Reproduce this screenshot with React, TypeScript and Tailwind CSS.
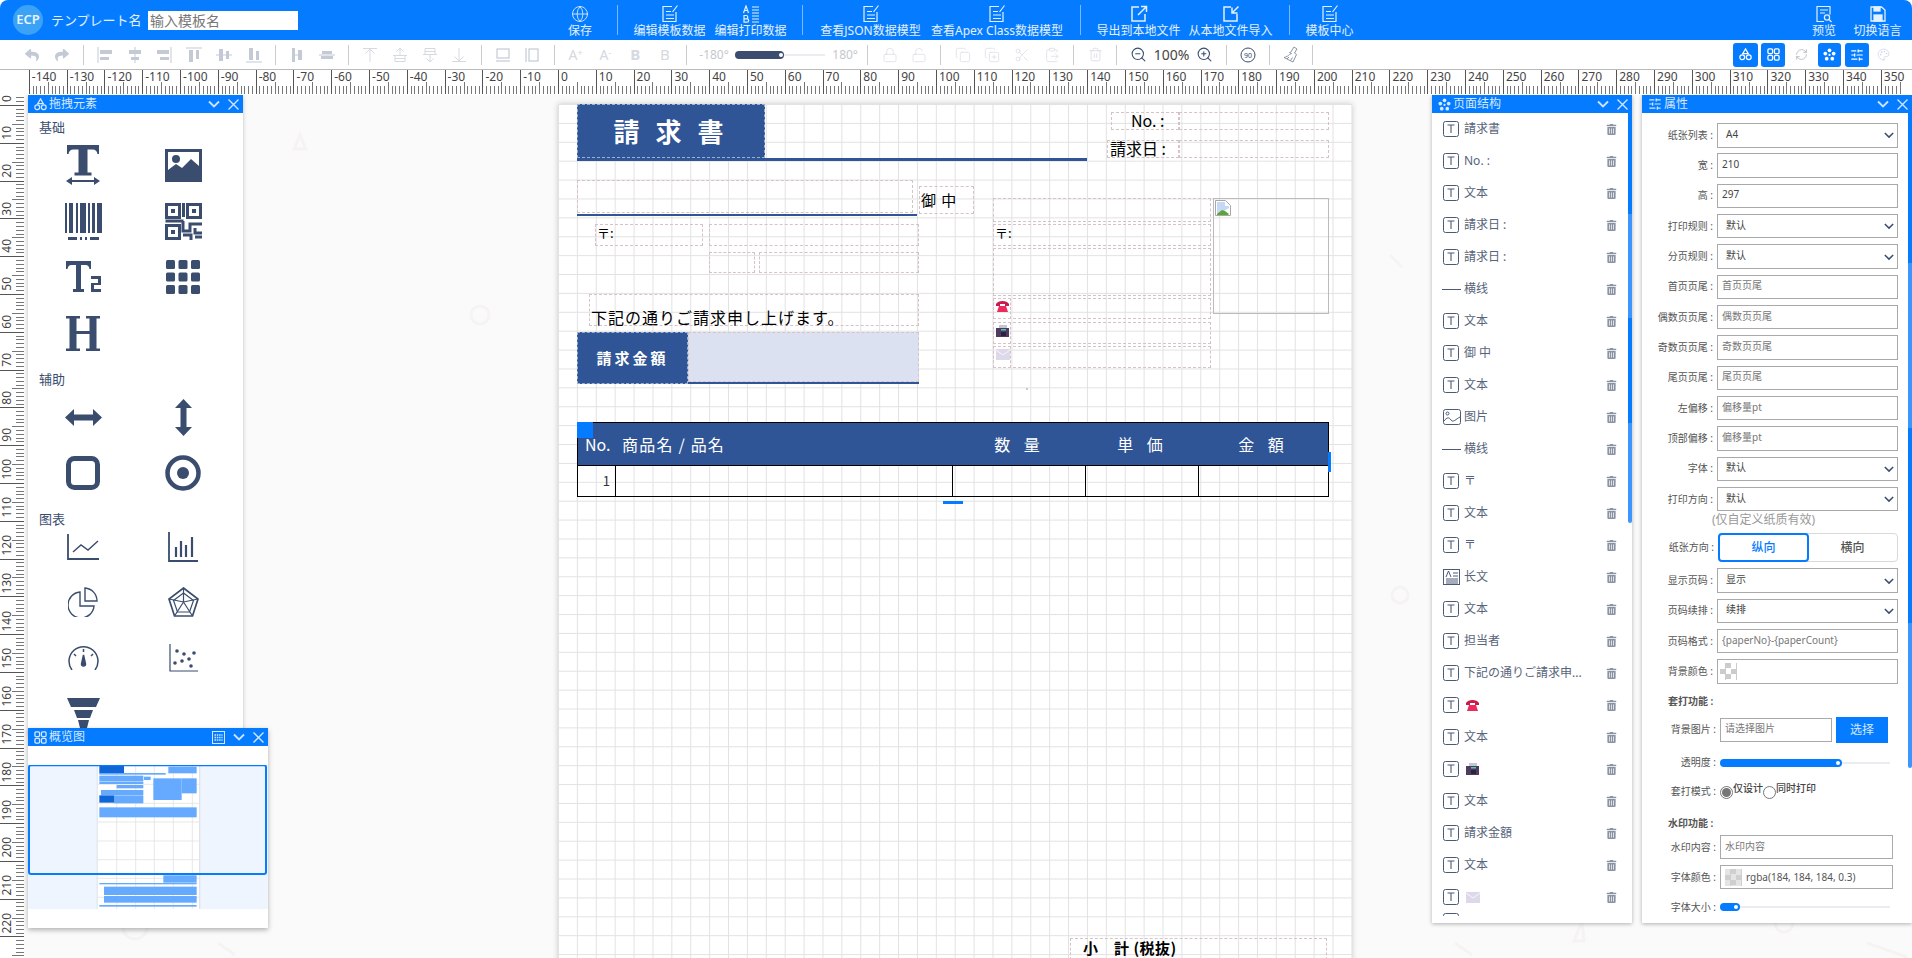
import React from 'react';
import {
  Copy, CopyPlus, ClipboardPaste, Globe, Lock, LockOpen,
  Palette, RefreshCw, Scissors, SlidersHorizontal, Trash2, ZoomIn, ZoomOut,
} from 'lucide-react';
import { FaReply, FaShare, FaTrashAlt } from 'react-icons/fa';

const ORIGIN_X = 558;
const ORIGIN_Y = 105;
const MM = 3.7795;

function Chevron({ className = 'text-[#cfe5ff]' }: { className?: string }) {
  return (
    <svg width="12" height="8" viewBox="0 0 12 8" className={className} fill="none" stroke="currentColor" strokeWidth="1.8">
      <path d="M1 1.5l5 5 5-5" />
    </svg>
  );
}

function CloseMark() {
  return (
    <svg width="11" height="11" viewBox="0 0 11 11" className="text-[#d5e8ff]" fill="none" stroke="currentColor" strokeWidth="1.3">
      <path d="M.5.5l10 10M10.5.5l-10 10" />
    </svg>
  );
}

function ShapesIcon({ size = 13 }: { size?: number }) {
  return (
    <svg width={size} height={size} viewBox="0 0 14 14" fill="none" stroke="currentColor" strokeWidth="1.3">
      <path d="M7 1l3 5H4z" />
      <circle cx="3.5" cy="10" r="2.6" />
      <circle cx="10.5" cy="10" r="2.6" />
    </svg>
  );
}

function ClusterIcon({ size = 13 }: { size?: number }) {
  return (
    <svg width={size} height={size} viewBox="0 0 14 14" fill="currentColor">
      <circle cx="7" cy="2.5" r="2" />
      <circle cx="2.5" cy="6" r="2" />
      <circle cx="11.5" cy="6" r="2" />
      <circle cx="4" cy="11.5" r="2" />
      <circle cx="10" cy="11.5" r="2" />
      <circle cx="7" cy="7.5" r="1.2" />
    </svg>
  );
}

function TilesIcon({ size = 13 }: { size?: number }) {
  return (
    <svg width={size} height={size} viewBox="0 0 14 14" fill="none" stroke="currentColor" strokeWidth="1.4">
      <rect x="1" y="1" width="5" height="5" rx="1.2" />
      <rect x="8" y="1" width="5" height="5" rx="1.2" />
      <rect x="1" y="8" width="5" height="5" rx="1.2" />
      <rect x="8" y="8" width="5" height="5" rx="1.2" />
    </svg>
  );
}

function PanelHeader({ icon, title, extra }: { icon: React.ReactNode; title: string; extra?: React.ReactNode }) {
  return (
    <div className="h-[18px] bg-[#057cff] flex items-center pl-[6px] pr-[4px] text-[#d5e8ff] shrink-0">
      {icon}
      <span className="ml-[2px] text-[12px] leading-[18px]">{title}</span>
      <div className="ml-auto flex items-center gap-[8px]">
        {extra}
        <Chevron />
        <CloseMark />
      </div>
    </div>
  );
}

function DocEdit() {
  return (
    <svg width="18" height="18" viewBox="0 0 18 18" fill="none" stroke="currentColor" strokeWidth="1.2">
      <path d="M11 1.5H2v15h13V7" />
      <path d="M16.5 .5l-5 6.5" />
      <path d="M5 6.5h5M5 10h8M5 13.5h8" />
    </svg>
  );
}

function AbList() {
  return (
    <svg width="18" height="18" viewBox="0 0 18 18" fill="none" stroke="currentColor" strokeWidth="1.2">
      <path d="M1.5 8l2.5-7 2.5 7M2.5 5.5h3" />
      <path d="M2 10.5h2.5a1.7 1.7 0 010 3.3H2zM2 13.8h3a1.7 1.7 0 010 3.4H2z" />
      <path d="M10 2h7M10 5h7M10 8h7M10 11h7M10 14h7M10 17h7" />
    </svg>
  );
}

function ExportIcon() {
  return (
    <svg width="18" height="18" viewBox="0 0 18 18" fill="none" stroke="currentColor" strokeWidth="1.5">
      <path d="M9 2H2v14h13V9" />
      <path d="M8 10l8-8M11 1.5h5.5V7" />
    </svg>
  );
}

function ImportIcon() {
  return (
    <svg width="18" height="18" viewBox="0 0 18 18" fill="none" stroke="currentColor" strokeWidth="1.5">
      <path d="M9 2H2v14h13V9" />
      <path d="M16.5 1.5l-6 6M10 2.5v5.5h5.5" />
    </svg>
  );
}

function PreviewIcon() {
  return (
    <svg width="18" height="18" viewBox="0 0 18 18" fill="none" stroke="currentColor" strokeWidth="1.2">
      <path d="M9 16.5H2v-15h13v8" />
      <path d="M5 5h8M5 8h5" />
      <circle cx="12" cy="12.5" r="2.6" />
      <path d="M14 14.5l2.5 2.5" />
    </svg>
  );
}

function FloppyIcon() {
  return (
    <svg width="18" height="18" viewBox="0 0 18 18" fill="none" stroke="currentColor" strokeWidth="1.3">
      <path d="M2 2h10.5l3.5 3v11H2z" />
      <rect x="5" y="2" width="6" height="4" fill="currentColor" />
      <rect x="5" y="10" width="8" height="6" fill="currentColor" />
    </svg>
  );
}

function HeaderBtn({ label, className, children }: { label: string; className: string; children: React.ReactNode }) {
  return (
    <div className={`flex flex-col items-center pt-[5px] shrink-0 text-[#e3f0ff] ${className}`}>
      <div className="h-[18px] flex items-center">{children}</div>
      <span className="mt-[1px] text-[12px] leading-[14px] whitespace-nowrap">{label}</span>
    </div>
  );
}

function HeaderSep({ className }: { className: string }) {
  return <div className={`w-px h-[30px] bg-[#7ab8ff] shrink-0 ${className}`} />;
}

function Header() {
  return (
    <div className="h-[40px] bg-[#057cff] rounded-t-[8px] flex items-start shrink-0">
      <div className="mt-[5px] ml-[13px] w-[30px] h-[30px] rounded-full bg-[#3ba2f5] text-[#e8f5ff] text-[13px] font-semibold flex items-center justify-center shrink-0">ECP</div>
      <span className="mt-[12px] ml-[8px] w-[97px] text-[13px] leading-[16px] text-[#e3f0ff] whitespace-nowrap">テンプレート名</span>
      <div className="mt-[11px] w-[150px] h-[19px] bg-white text-[14px] leading-[19px] pl-[2px] text-[#777] shrink-0">输入模板名</div>
      <HeaderBtn label="保存" className="ml-[262px] w-[40px]"><Globe size={18} strokeWidth={1.1} /></HeaderBtn>
      <HeaderSep className="mt-[5px] ml-[17px]" />
      <HeaderBtn label="编辑模板数据" className="ml-[15px] w-[73px]"><DocEdit /></HeaderBtn>
      <HeaderBtn label="编辑打印数据" className="ml-[8px] w-[73px]"><AbList /></HeaderBtn>
      <HeaderSep className="mt-[5px] ml-[15px]" />
      <HeaderBtn label="查看JSON数据模型" className="ml-[16px] w-[103px]"><DocEdit /></HeaderBtn>
      <HeaderBtn label="查看Apex Class数据模型" className="ml-[8px] w-[134px]"><DocEdit /></HeaderBtn>
      <HeaderSep className="mt-[5px] ml-[16px]" />
      <HeaderBtn label="导出到本地文件" className="ml-[15px] w-[85px]"><ExportIcon /></HeaderBtn>
      <HeaderBtn label="从本地文件导入" className="ml-[8px] w-[83px]"><ImportIcon /></HeaderBtn>
      <HeaderSep className="mt-[5px] ml-[17px]" />
      <HeaderBtn label="模板中心" className="ml-[15px] w-[49px]"><DocEdit /></HeaderBtn>
      <HeaderBtn label="预览" className="ml-auto w-[24px]"><PreviewIcon /></HeaderBtn>
      <HeaderBtn label="切换语言" className="ml-[18px] mr-[11px] w-[47px]"><FloppyIcon /></HeaderBtn>
    </div>
  );
}

function Tool({ children, wide }: { children: React.ReactNode; wide?: boolean }) {
  return <div className={`h-[24px] flex items-center justify-center shrink-0 ${wide ? 'w-[36.8px]' : 'w-[29.8px]'}`}>{children}</div>;
}

function ToolSep() {
  return (
    <div className="w-[13.4px] flex justify-center shrink-0">
      <div className="w-px h-[20px] bg-[#cccccc]" />
    </div>
  );
}

// filled bars with a guide line, used by all the align buttons
function Bars({ rects, line }: { rects: number[][]; line: number[] }) {
  return (
    <svg width="16" height="16" viewBox="0 0 16 16" className="text-[#c3cad6]">
      <path d={`M${line[0]} ${line[1]}L${line[2]} ${line[3]}`} stroke="currentColor" strokeWidth="1" />
      {rects.map((r, i) => <rect key={i} x={r[0]} y={r[1]} width={r[2]} height={r[3]} fill="currentColor" />)}
    </svg>
  );
}

function LayerIcon({ d }: { d: string }) {
  return (
    <svg width="16" height="16" viewBox="0 0 16 16" fill="none" stroke="#d5d9e0" strokeWidth="1">
      <path d={d} />
    </svg>
  );
}

function BroomIcon() {
  return (
    <svg width="16" height="17" viewBox="0 0 16 17" fill="none" stroke="#8a94a6" strokeWidth="1">
      <path d="M11 1l3 2-2.500 4 2 1.500-3.500 7.500-9-4.500c2.500-.5 4-1.500 5.500-3L8.500 7.500 6.500 6.500l1 0z" />
      <path d="M4 13l2-2M7.500 14.500l2-3" />
    </svg>
  );
}

function Toolbar() {
  const off = 'text-[#d5d9e0]';
  return (
    <div className="h-[30px] bg-white border-b border-[#bbbbbb] flex items-center pl-[17px] pr-[22px] shrink-0">
      <Tool><FaReply size={14} className="text-[#c3cad6]" /></Tool>
      <Tool><FaShare size={14} className="text-[#c3cad6]" /></Tool>
      <ToolSep />
      <Tool><Bars line={[1, 0, 1, 16]} rects={[[3, 3, 12, 4], [3, 10, 9, 3]]} /></Tool>
      <Tool><Bars line={[8, 0, 8, 16]} rects={[[2, 3, 12, 4], [4, 10, 8, 3]]} /></Tool>
      <Tool><Bars line={[15, 0, 15, 16]} rects={[[1, 3, 12, 4], [4, 10, 9, 3]]} /></Tool>
      <Tool><Bars line={[0, 1, 16, 1]} rects={[[3, 3, 4, 12], [10, 3, 3, 9]]} /></Tool>
      <Tool><Bars line={[0, 8, 16, 8]} rects={[[3, 2, 4, 12], [10, 4, 3, 8]]} /></Tool>
      <Tool><Bars line={[0, 15, 16, 15]} rects={[[3, 1, 4, 12], [10, 4, 3, 9]]} /></Tool>
      <ToolSep />
      <Tool><Bars line={[8, 0, 8, 0]} rects={[[3, 1, 3, 14], [9, 3, 4, 10], [6, 7.5, 3, 1]]} /></Tool>
      <Tool><Bars line={[0, 8, 16, 8]} rects={[[3, 4, 10, 3], [2, 9, 12, 3]]} /></Tool>
      <ToolSep />
      <Tool><LayerIcon d="M1 1.500h14M8 15V2M3.500 6.500L8 2l4.500 4.500" /></Tool>
      <Tool><LayerIcon d="M8 8V1M4.500 4.500L8 1l3.500 3.500M1 8.500h14M3 8.500v6h10v-6M3 11.500h10" /></Tool>
      <Tool><LayerIcon d="M1 7.500h14M3 7.500v-6h10v6M3 4.500h10M8 8v7M4.500 11.500L8 15l3.500-3.500" /></Tool>
      <Tool><LayerIcon d="M1 14.500h14M8 1v13M3.500 9.500L8 14l4.500-4.500" /></Tool>
      <ToolSep />
      <Tool>
        <svg width="16" height="16" viewBox="0 0 16 16" fill="none" stroke="#c3cad6" strokeWidth="1.2"><rect x="2" y="2" width="12" height="9" /><path d="M1 14h14" /></svg>
      </Tool>
      <Tool>
        <svg width="16" height="16" viewBox="0 0 16 16" fill="none" stroke="#c3cad6" strokeWidth="1.2"><rect x="5" y="2" width="9" height="12" /><path d="M2 1v14" /></svg>
      </Tool>
      <ToolSep />
      <Tool><span className="text-[14px] text-[#d5d9e0]">A<sup className="text-[9px]">+</sup></span></Tool>
      <Tool><span className="text-[14px] text-[#d5d9e0]">A<sup className="text-[9px]">-</sup></span></Tool>
      <Tool><span className="text-[15px] font-bold text-[#d5d9e0]">B</span></Tool>
      <Tool><span className="text-[15px] text-[#d5d9e0]">B</span></Tool>
      <ToolSep />
      <div className="w-[168px] flex items-center shrink-0 pl-[6px] text-[12px] text-[#c4c8ce]">
        <span className="w-[36px]">-180°</span>
        <div className="w-[90px] h-[2px] bg-[#ececf0] relative">
          <div className="absolute left-0 top-[-3px] w-[49px] h-[8px] rounded-full bg-[#3a4d6e]" />
          <div className="absolute left-[44px] top-[-1px] w-[4px] h-[4px] rounded-full bg-white" />
        </div>
        <span className="ml-[7px]">180°</span>
      </div>
      <ToolSep />
      <Tool><Lock size={16} strokeWidth={1} className={off} /></Tool>
      <Tool><LockOpen size={16} strokeWidth={1} className={off} /></Tool>
      <ToolSep />
      <Tool><Copy size={16} strokeWidth={1} className={off} /></Tool>
      <Tool><CopyPlus size={16} strokeWidth={1} className={off} /></Tool>
      <Tool><Scissors size={16} strokeWidth={1} className={off} /></Tool>
      <Tool><ClipboardPaste size={16} strokeWidth={1} className={off} /></Tool>
      <ToolSep />
      <Tool><Trash2 size={15} strokeWidth={1.3} className={off} /></Tool>
      <ToolSep />
      <Tool><ZoomOut size={17} strokeWidth={1.5} className="text-[#3a4d6e]" /></Tool>
      <Tool wide><span className="text-[14px] text-[#444]">100%</span></Tool>
      <Tool><ZoomIn size={17} strokeWidth={1.5} className="text-[#3a4d6e]" /></Tool>
      <ToolSep />
      <Tool>
        <svg width="16" height="16" viewBox="0 0 16 16" fill="none" stroke="#3a4d6e" strokeWidth="1"><circle cx="8" cy="8" r="7" /><text x="8" y="10.5" textAnchor="middle" fontSize="7" fill="#3a4d6e" stroke="none">90</text></svg>
      </Tool>
      <ToolSep />
      <Tool><BroomIcon /></Tool>
      <ToolSep />
      <div className="ml-auto flex items-center shrink-0">
        <div className="w-[25px] h-[24px] rounded-[3px] bg-[#057cff] flex items-center justify-center text-white"><ShapesIcon /></div>
        <div className="ml-[3px] w-[24px] h-[24px] rounded-[3px] bg-[#057cff] flex items-center justify-center text-white"><TilesIcon /></div>
        <div className="w-[33px] flex justify-center"><RefreshCw size={13} strokeWidth={1} className="text-[#8a94a6]" /></div>
        <div className="w-[23px] h-[24px] rounded-[3px] bg-[#057cff] flex items-center justify-center text-white"><ClusterIcon /></div>
        <div className="ml-[4px] w-[24px] h-[24px] rounded-[3px] bg-[#057cff] flex items-center justify-center text-white"><SlidersHorizontal size={14} /></div>
        <div className="ml-[7px] w-[14px] flex justify-center"><Palette size={13} strokeWidth={1} className="text-[#b9c4e6]" /></div>
      </div>
    </div>
  );
}

const range = (a: number, b: number) => Array.from({ length: b - a + 1 }, (_, i) => a + i);

function TopRuler() {
  const base = ORIGIN_X - 24;
  return (
    <div className="h-[25px] bg-white flex shrink-0">
      <div className="w-[24px] shrink-0" />
      <div className="relative w-[1888px] h-[25px] overflow-hidden">
        <svg width="1888" height="25" className="block">
          {range(-140, 355).map((mm) => {
            const x = Math.round(base + mm * MM) + 0.5;
            const major = mm % 10 === 0;
            const mid = mm % 5 === 0;
            return <path key={mm} d={`M${x} ${major ? 0 : mid ? 12 : 16}V24`} stroke={major ? '#555' : '#777'} strokeWidth="1" />;
          })}
        </svg>
        {range(-14, 35).map((t) => (
          <span
            key={t}
            className="absolute top-[1px] text-[12px] leading-[12px] text-[#444] whitespace-nowrap"
            style={{ left: base + t * 10 * MM + 3 }}
          >
            {t * 10}
          </span>
        ))}
      </div>
    </div>
  );
}

function LeftRuler() {
  const base = ORIGIN_Y - 95;
  return (
    <div className="relative w-[24px] h-[863px] overflow-hidden">
      <svg width="24" height="863" className="block bg-white">
        {range(-2, 230).map((mm) => {
          const y = Math.round(base + mm * MM) + 0.5;
          const major = mm % 10 === 0;
          const mid = mm % 5 === 0;
          return <path key={mm} d={`M${major ? 0 : mid ? 12 : 16} ${y}H24`} stroke={major ? '#555' : '#777'} strokeWidth="1" />;
        })}
      </svg>
      {range(0, 22).map((t) => (
        <span
          key={t}
          className="absolute left-[1px] text-[12px] leading-[12px] text-[#444] whitespace-nowrap [writing-mode:vertical-rl] rotate-180"
          style={{ bottom: 863 - (base + t * 10 * MM) + 3 }}
        >
          {t * 10}
        </span>
      ))}
    </div>
  );
}

const INK = '#3a4d6e';

const elementIcons = {
  text: (
    <svg width="36" height="40" viewBox="0 0 36 40" fill={INK}>
      <path d="M2 0h32v9h-1.500c-.5-3-2-4.500-5-4.500h-5v23h4v3h-17v-3h4v-23h-5c-3 0-4.500 1.500-5 4.500H2z" />
      <path d="M1 36l6-4v3h22v-3l6 4-6 4v-3H7v3z" />
    </svg>
  ),
  image: (
    <svg width="37" height="33" viewBox="0 0 37 33" fill={INK}>
      <path fillRule="evenodd" d="M0 0h37v33H0zM3 3v18l8-6 6 4 9-9 8 7V3z" />
      <circle cx="11" cy="10" r="4" />
    </svg>
  ),
  barcode: (
    <svg width="37" height="37" viewBox="0 0 37 37" fill={INK}>
      <rect x="0" y="0" width="2" height="30" /><rect x="4" y="0" width="4" height="30" /><rect x="11" y="0" width="2" height="30" />
      <rect x="15" y="0" width="6" height="30" /><rect x="23" y="0" width="2" height="30" /><rect x="27" y="0" width="3" height="30" /><rect x="32" y="0" width="5" height="30" />
      <rect x="3" y="34" width="9" height="3" /><rect x="15" y="34" width="2" height="3" /><rect x="20" y="34" width="2" height="3" /><rect x="25" y="34" width="9" height="3" />
    </svg>
  ),
  qr: (
    <svg width="37" height="37" viewBox="0 0 37 37" fill="none" stroke={INK} strokeWidth="3">
      <rect x="1.500" y="1.500" width="13" height="13" /><rect x="22.500" y="1.500" width="13" height="13" /><rect x="1.500" y="22.500" width="13" height="13" />
      <rect x="6" y="6" width="4" height="4" fill={INK} stroke="none" /><rect x="27" y="6" width="4" height="4" fill={INK} stroke="none" /><rect x="6" y="27" width="4" height="4" fill={INK} stroke="none" />
      <path d="M18.500 0v14M18.500 18h-18M18 18v10h7v-7h12M18 32h8v5M30 25v5h7M30 34h7" />
    </svg>
  ),
  text2: (
    <svg width="35" height="32" viewBox="0 0 35 32" fill={INK}>
      <path d="M0 0h25v8h-1.500c-.5-2.500-1.500-4-4-4H15v24h3v3H7v-3h3V4H5.500c-2.500 0-3.500 1.500-4 4H0z" />
      <path d="M25 15h10v9h-7v4h7v3H25v-9h7v-4h-7z" />
    </svg>
  ),
  grid: (
    <svg width="34" height="34" viewBox="0 0 34 34" fill={INK}>
      {[0, 12.5, 25].flatMap((y) => [0, 12.5, 25].map((x) => <rect key={`${x}-${y}`} x={x} y={y} width="9" height="9" rx="1.5" />))}
    </svg>
  ),
  heading: (
    <svg width="34" height="35" viewBox="0 0 34 35" fill={INK}>
      <path d="M0 0h14v2.500h-3.500v12.500h13V2.500H20V0h14v2.500h-3.500v30H34V35H20v-2.500h3.500V18h-13v14.500H14V35H0v-2.500h3.500v-30H0z" />
    </svg>
  ),
  hline: (
    <svg width="37" height="17" viewBox="0 0 37 17" fill={INK}>
      <path d="M0 8.500L9 0v5.500h19V0l9 8.500-9 8.500v-5.500H9V17z" />
    </svg>
  ),
  vline: (
    <svg width="17" height="37" viewBox="0 0 17 37" fill={INK}>
      <path d="M8.500 0L17 9h-5.500v19H17l-8.500 9L0 28h5.500V9H0z" />
    </svg>
  ),
  rect: (
    <svg width="34" height="34" viewBox="0 0 34 34" fill="none" stroke={INK} strokeWidth="5">
      <rect x="2.5" y="2.5" width="29" height="29" rx="6" />
    </svg>
  ),
  circle: (
    <svg width="36" height="36" viewBox="0 0 36 36" fill="none" stroke={INK} strokeWidth="4.5">
      <circle cx="18" cy="18" r="15.5" />
      <circle cx="18" cy="18" r="6" fill={INK} stroke="none" />
    </svg>
  ),
  line: (
    <svg width="32" height="26" viewBox="0 0 32 26" fill="none" stroke={INK} strokeWidth="1.4">
      <path d="M1 0v25h31" strokeWidth="1.8" />
      <path d="M6 18l8-7 7 5 10-9" />
    </svg>
  ),
  bar: (
    <svg width="30" height="30" viewBox="0 0 30 30" fill="none" stroke={INK} strokeWidth="1.8">
      <path d="M1 0v29h29" />
      <path d="M8 25V15M13 25V9M18 25V13M24 25V5" strokeWidth="2.2" />
    </svg>
  ),
  pie: (
    <svg width="30" height="30" viewBox="0 0 30 30" fill="none" stroke={INK} strokeWidth="1.4">
      <path d="M12 5a13 13 0 1014 14H12z" />
      <path d="M17 1a13 13 0 0112 13H17z" />
    </svg>
  ),
  radar: (
    <svg width="31" height="30" viewBox="0 0 31 30" fill="none" stroke={INK} strokeWidth="1.2">
      <path d="M15.500 1L30 12l-5.500 17h-18L1 12z" strokeWidth="1.7" />
      <path d="M15.500 6l10 7.500-4 11.500H9.500l-4-11.500z" />
      <path d="M15.500 1v14M1 12l14.500 3L30 12M6.500 29l9-14 9 14" />
    </svg>
  ),
  gauge: (
    <svg width="31" height="25" viewBox="0 0 31 25" fill="none" stroke={INK} strokeWidth="1.5">
      <path d="M4 25A14.500 14.500 0 1127 25" />
      <path d="M15.500 4v3M6 9l2 2M25 9l-2 2" />
      <path d="M15.500 10l-2 9a2 2 0 004 0z" fill={INK} />
    </svg>
  ),
  scatter: (
    <svg width="29" height="28" viewBox="0 0 29 28" fill={INK}>
      <path d="M1 0v27h28" fill="none" stroke={INK} strokeWidth="1.2" />
      <circle cx="8" cy="7" r="1.8" /><circle cx="15" cy="10" r="1.8" /><circle cx="25" cy="9" r="1.8" />
      <circle cx="13" cy="17" r="1.8" /><circle cx="20" cy="15" r="1.8" /><circle cx="6" cy="19" r="1.8" /><circle cx="22" cy="22" r="1.8" />
    </svg>
  ),
  funnel: (
    <svg width="33" height="30" viewBox="0 0 33 30" fill={INK}>
      <path d="M0 0h33l-4 9H4zM7 12h19l-3 8H10zM11 22h11l-2 8h-7z" />
    </svg>
  ),
};

function IconGrid({ icons, className }: { icons: React.ReactNode[]; className: string }) {
  return (
    <div className={`grid grid-cols-[100px_100px] pl-[5px] ${className}`}>
      {icons.map((icon, i) => (
        <div key={i} className="h-full flex items-center justify-center">{icon}</div>
      ))}
    </div>
  );
}

function SectionTitle({ label, className }: { label: string; className: string }) {
  return <div className={`h-[16px] pl-[11px] text-[13px] leading-[16px] text-[#3a4d6e] ${className}`}>{label}</div>;
}

function ElementPanel() {
  const e = elementIcons;
  return (
    <div className="w-[215px] h-[640px] bg-white shadow-[0_1px_4px_rgba(0,0,0,0.25)] overflow-hidden flex flex-col">
      <PanelHeader icon={<ShapesIcon />} title="拖拽元素" />
      <SectionTitle label="基础" className="mt-[6px]" />
      <IconGrid className="mt-[2px] auto-rows-[56px]" icons={[e.text, e.image, e.barcode, e.qr, e.text2, e.grid, e.heading]} />
      <SectionTitle label="辅助" className="mt-[10px]" />
      <IconGrid className="mt-[2px] auto-rows-[56px]" icons={[e.hline, e.vline, e.rect, e.circle]} />
      <SectionTitle label="图表" className="mt-[10px]" />
      <IconGrid className="mt-[-8px] auto-rows-[55.5px]" icons={[e.line, e.bar, e.pie, e.radar, e.gauge, e.scatter, e.funnel]} />
    </div>
  );
}

function OverviewMap() {
  const lite = '#66aaff';
  const dark = '#0f66d6';
  return (
    <svg width="240" height="144.33" viewBox="84 735 720 433" className="block">
      <rect x="84" y="735" width="720" height="433" fill="#eff5fe" />
      <rect x="293" y="738" width="304" height="430" fill="#fff" />
      <rect x="290" y="738" width="3" height="430" fill="#dfe3ea" />
      <rect x="597" y="738" width="4" height="430" fill="#dfe3ea" />
      {[350, 407, 463, 520, 577].map((x) => <path key={x} d={`M${x} 738V1168`} stroke="#dcdcdc" strokeWidth="2" />)}
      {[793, 850, 906, 963, 1019, 1075, 1132].map((y) => <path key={y} d={`M293 ${y}H597`} stroke="#dcdcdc" strokeWidth="2" />)}
      <rect x="298" y="738" width="74" height="22" fill={dark} />
      <rect x="505" y="740" width="85" height="20" fill={lite} />
      <rect x="298" y="759" width="199" height="5" fill={lite} />
      <rect x="298" y="767" width="132" height="17" fill={lite} />
      <rect x="432" y="770" width="20" height="10" fill={lite} />
      <rect x="298" y="785" width="132" height="7" fill={lite} />
      <rect x="350" y="795" width="80" height="10" fill={lite} />
      <rect x="460" y="775" width="85" height="65" fill={lite} />
      <rect x="545" y="775" width="45" height="45" fill={lite} />
      <rect x="303" y="810" width="127" height="15" fill={lite} />
      <rect x="342" y="826" width="88" height="24" fill={lite} />
      <rect x="298" y="826" width="44" height="22" fill={dark} />
      <rect x="298" y="862" width="292" height="30" fill={lite} />
      <rect x="490" y="1066" width="100" height="22" fill={lite} />
      <rect x="298" y="1089" width="292" height="4" fill={lite} />
      <rect x="312" y="1100" width="278" height="25" fill={lite} />
      <rect x="312" y="1128" width="278" height="20" fill={lite} />
      <rect x="298" y="1155" width="292" height="5" fill={lite} />
      <rect x="87" y="736" width="711" height="326" rx="6" fill="none" stroke="#057cff" strokeWidth="6" />
    </svg>
  );
}

function OverviewPanel() {
  return (
    <div className="absolute left-0 top-[633px] w-[240px] h-[200px] bg-white shadow-[0_2px_5px_rgba(0,0,0,0.3)]">
      <PanelHeader
        icon={<TilesIcon />}
        title="概览图"
        extra={
          <svg width="13" height="13" viewBox="0 0 13 13" fill="none" stroke="#d5e8ff" strokeWidth="1">
            <rect x=".5" y=".5" width="12" height="12" />
            <path d="M2.500 4h8M2.500 6.500h8M2.500 9h8" strokeWidth="1.5" strokeDasharray="1.5 .8" />
          </svg>
        }
      />
      <div className="mt-[19px]"><OverviewMap /></div>
    </div>
  );
}

function PhoneIcon() {
  return (
    <svg width="13" height="11" viewBox="0 0 13 11">
      <path d="M0 3c2-4 11-4 13 0v2H9V3H4v2H0z" fill="#c81b4b" />
      <path d="M3 5h7l2 6H1z" fill="#ec2a5c" />
    </svg>
  );
}

function FaxIcon() {
  return (
    <svg width="13" height="12" viewBox="0 0 13 12">
      <rect x="3" y="0" width="8" height="4" fill="#c9c4cf" />
      <rect x="0" y="3" width="13" height="9" fill="#4f3a60" />
      <rect x="5" y="4" width="5" height="1.5" fill="#3fd0b0" />
      <rect x="5" y="7" width="5" height="4" fill="#2e2040" />
    </svg>
  );
}

function MailIcon() {
  return (
    <svg width="14" height="11" viewBox="0 0 14 11">
      <rect width="14" height="11" fill="#ded9ea" />
      <path d="M0 1l7 5 7-5" fill="none" stroke="#f6f4fa" strokeWidth="1" />
    </svg>
  );
}

function TextItemIcon() {
  return (
    <svg width="16" height="16" viewBox="0 0 16 16" fill="none" stroke="#4a5a78" strokeWidth="1">
      <rect x=".5" y=".5" width="15" height="15" rx="2" />
      <path d="M4.500 4h7M8 4v8" strokeWidth="1.1" />
    </svg>
  );
}

function LineItemIcon() {
  return <div className="w-[19px] h-px bg-[#4a5a78] -ml-[1px]" />;
}

function PicItemIcon() {
  return (
    <svg width="18" height="16" viewBox="0 0 18 16" fill="none" stroke="#4a5a78" strokeWidth="1">
      <rect x=".5" y=".5" width="17" height="15" rx="2" />
      <circle cx="4.5" cy="4.5" r="1.5" />
      <path d="M1 12c3-4 5-4 7-1s5-1 9-3" />
    </svg>
  );
}

function LongItemIcon() {
  return (
    <svg width="17" height="16" viewBox="0 0 17 16" fill="none" stroke="#4a5a78" strokeWidth="1">
      <rect x=".5" y=".5" width="16" height="15" />
      <path d="M3 8l2.500-6L8 8M10 4h5M10 7h5M3 10h12M3 12h12M3 14h12" />
    </svg>
  );
}

type TreeItem = { kind: 'text' | 'line' | 'pic' | 'long'; label?: string; mark?: React.ReactNode };

const treeItems: TreeItem[] = [
  { kind: 'text', label: '請求書' },
  { kind: 'text', label: 'No. :' },
  { kind: 'text', label: '文本' },
  { kind: 'text', label: '請求日 :' },
  { kind: 'text', label: '請求日 :' },
  { kind: 'line', label: '横线' },
  { kind: 'text', label: '文本' },
  { kind: 'text', label: '御 中' },
  { kind: 'text', label: '文本' },
  { kind: 'pic', label: '图片' },
  { kind: 'line', label: '横线' },
  { kind: 'text', label: '〒' },
  { kind: 'text', label: '文本' },
  { kind: 'text', label: '〒' },
  { kind: 'long', label: '长文' },
  { kind: 'text', label: '文本' },
  { kind: 'text', label: '担当者' },
  { kind: 'text', label: '下記の通りご請求申...' },
  { kind: 'text', mark: <PhoneIcon /> },
  { kind: 'text', label: '文本' },
  { kind: 'text', mark: <FaxIcon /> },
  { kind: 'text', label: '文本' },
  { kind: 'text', label: '請求金額' },
  { kind: 'text', label: '文本' },
  { kind: 'text', mark: <MailIcon /> },
];

function StructurePanel() {
  return (
    <div className="ml-[80px] w-[200px] h-[828px] bg-white shadow-[0_1px_4px_rgba(0,0,0,0.3)] relative overflow-hidden flex flex-col shrink-0">
      <PanelHeader icon={<ClusterIcon />} title="页面结构" />
      <div>
        {treeItems.map((item, i) => (
          <div key={i} className="h-[32px] flex items-center pl-[11px] pr-[15px]">
            <div className="w-[21px] flex items-center shrink-0">
              {item.kind === 'text' && <TextItemIcon />}
              {item.kind === 'line' && <LineItemIcon />}
              {item.kind === 'pic' && <PicItemIcon />}
              {item.kind === 'long' && <LongItemIcon />}
            </div>
            <span className={`text-[12px] text-[#58647a] whitespace-nowrap ${item.mark ? 'pl-[2px]' : ''}`}>{item.mark || item.label}</span>
            <FaTrashAlt size={11} className="ml-auto text-[#8a93a3]" />
          </div>
        ))}
        {/* next row, only its icon's top edge shows above the panel bottom */}
        <div className="h-[3px] pl-[11px] pt-[0px] overflow-hidden"><TextItemIcon /></div>
      </div>
      <div className="absolute right-0 top-[18px] w-[4px] h-[410px] flex flex-col rounded-b-[2px] overflow-hidden">
        <div className="h-[101px] bg-[#057cff]" />
        <div className="h-[104px] bg-[#3d95ff]" />
        <div className="h-[105px] bg-[#057cff]" />
        <div className="h-[100px] bg-[#3d95ff]" />
      </div>
    </div>
  );
}

function FieldRow({ label, children }: { label: string; children: React.ReactNode }) {
  return (
    <div className="h-[24.5px] flex items-center">
      <span className="w-[71px] pr-[4px] text-right text-[10px] text-[#555] whitespace-nowrap shrink-0">{label} :</span>
      {children}
    </div>
  );
}

function SelectBox({ value }: { value: string }) {
  return (
    <div className="w-[181px] h-full border border-[#a9a9a9] flex items-center pl-[8px] pr-[3px] text-[10px] text-[#444]">
      <span className="-mt-[2px]">{value}</span>
      <Chevron className="ml-auto w-[10px] text-[#3a4d6e]" />
    </div>
  );
}

function InputBox({ value, hint, className = 'w-[181px]', children }: { value?: string; hint?: string; className?: string; children?: React.ReactNode }) {
  return (
    <div className={`h-full border border-[#a9a9a9] flex items-center pl-[4px] text-[10px] ${className}`}>
      {children}
      {value && <span className="-mt-[2px] text-[#444]">{value}</span>}
      {hint && <span className="-mt-[2px] text-[#777]">{hint}</span>}
    </div>
  );
}

function Checker({ className }: { className: string }) {
  return <div className={`bg-size-[11px_11px] ${className}`} />;
}

function Slider({ fill, knob }: { fill: string; knob: string }) {
  return (
    <div className="w-[170px] h-[2px] bg-[#eaecf2] relative">
      <div className={`absolute left-0 top-[-3px] h-[8px] rounded-full bg-[#057cff] ${fill}`} />
      <div className={`absolute top-[-1px] w-[4px] h-[4px] rounded-full bg-white ${knob}`} />
    </div>
  );
}

function WideLabel({ text }: { text: string }) {
  return <span className="w-[74px] pr-[4px] text-right text-[10px] text-[#555] whitespace-nowrap shrink-0">{text} :</span>;
}

function PropertyPanel() {
  return (
    <div className="ml-[10px] w-[270px] h-[828px] bg-white shadow-[0_1px_4px_rgba(0,0,0,0.3)] relative overflow-hidden flex flex-col shrink-0">
      <PanelHeader icon={<SlidersHorizontal size={14} />} title="属性" />
      <div className="pl-[4px] pt-[10px] flex flex-col gap-[5.83px]">
        <FieldRow label="纸张列表"><SelectBox value="A4" /></FieldRow>
        <FieldRow label="宽"><InputBox value="210" /></FieldRow>
        <FieldRow label="高"><InputBox value="297" /></FieldRow>
        <FieldRow label="打印规则"><SelectBox value="默认" /></FieldRow>
        <FieldRow label="分页规则"><SelectBox value="默认" /></FieldRow>
        <FieldRow label="首页页尾"><InputBox hint="首页页尾" /></FieldRow>
        <FieldRow label="偶数页页尾"><InputBox hint="偶数页页尾" /></FieldRow>
        <FieldRow label="奇数页页尾"><InputBox hint="奇数页页尾" /></FieldRow>
        <FieldRow label="尾页页尾"><InputBox hint="尾页页尾" /></FieldRow>
        <FieldRow label="左偏移"><InputBox hint="偏移量pt" /></FieldRow>
        <FieldRow label="顶部偏移"><InputBox hint="偏移量pt" /></FieldRow>
        <FieldRow label="字体"><SelectBox value="默认" /></FieldRow>
        <FieldRow label="打印方向"><SelectBox value="默认" /></FieldRow>
      </div>
      <div className="h-[22px] pl-[70px] text-[12px] leading-[18px] text-[#999]">(仅自定义纸质有效)</div>
      <div className="pl-[4px] flex flex-col gap-[5.83px]">
        <div className="h-[29px] flex items-center">
          <span className="w-[72px] pr-[4px] text-right text-[10px] text-[#555] shrink-0">纸张方向 :</span>
          <div className="w-[180px] h-full flex rounded-[4px] border border-[#d9d9d9] text-[12px] font-medium">
            <div className="w-[91px] -m-px rounded-[4px] border-2 border-[#057cff] text-[#057cff] flex items-center justify-center">纵向</div>
            <div className="flex-1 flex items-center justify-center text-[#555]">横向</div>
          </div>
        </div>
        <FieldRow label="显示页码"><SelectBox value="显示" /></FieldRow>
        <FieldRow label="页码续排"><SelectBox value="续排" /></FieldRow>
        <FieldRow label="页码格式"><InputBox hint="{paperNo}-{paperCount}" /></FieldRow>
        <FieldRow label="背景颜色">
          <InputBox>
            <Checker className="-ml-[2px] w-[17px] h-[17px] bg-[conic-gradient(#cccccc_25%,#ffffff_0_50%,#cccccc_0_75%,#ffffff_0)]" />
          </InputBox>
        </FieldRow>
      </div>
      <div className="mt-[9px] pl-[26px] text-[10px] leading-[16px] font-semibold text-[#555]">套打功能 :</div>
      <div className="mt-[8px] pl-[4px] h-[26px] flex items-center">
        <WideLabel text="背景图片" />
        <InputBox hint="请选择图片" className="w-[112px] !h-[24.5px]" />
        <div className="ml-[4px] w-[52px] h-[26px] bg-[#057cff] text-[#d5e8ff] text-[12px] flex items-center justify-center">选择</div>
      </div>
      <div className="mt-[12px] pl-[4px] h-[16px] flex items-center">
        <WideLabel text="透明度" />
        <Slider fill="w-[122px]" knob="left-[116px]" />
      </div>
      <div className="mt-[12px] pl-[4px] h-[16px] flex items-start">
        <span className="w-[74px] pr-[4px] text-right text-[10px] leading-[16px] text-[#555] whitespace-nowrap shrink-0">套打模式 :</span>
        <div className="flex items-start text-[10px] leading-[10px] text-[#444] font-medium">
          <div className="mt-[3px] w-[13px] h-[13px] rounded-full border border-[#777] flex items-center justify-center shrink-0">
            <div className="w-[9px] h-[9px] rounded-full bg-[#777]" />
          </div>
          <span className="whitespace-nowrap">仅设计</span>
          <div className="mt-[3px] w-[13px] h-[13px] rounded-full border border-[#777] shrink-0" />
          <span className="whitespace-nowrap">同时打印</span>
        </div>
      </div>
      <div className="mt-[16px] pl-[26px] text-[10px] leading-[16px] font-semibold text-[#555]">水印功能 :</div>
      <div className="mt-[4px] pl-[4px] h-[24.5px] flex items-center">
        <WideLabel text="水印内容" />
        <InputBox hint="水印内容" className="w-[173px]" />
      </div>
      <div className="mt-[5.5px] pl-[4px] h-[24.5px] flex items-center">
        <WideLabel text="字体颜色" />
        <InputBox className="w-[173px]">
          <Checker className="w-[17px] h-[17px] shrink-0 bg-[conic-gradient(#cfcfcf_25%,#e4e4e4_0_50%,#cfcfcf_0_75%,#e4e4e4_0)]" />
          <span className="ml-[4px] text-[#555]">rgba(184, 184, 184, 0.3)</span>
        </InputBox>
      </div>
      <div className="mt-[10px] pl-[4px] h-[16px] flex items-center">
        <WideLabel text="字体大小" />
        <Slider fill="w-[20px]" knob="left-[14px]" />
      </div>
      <div className="absolute right-0 top-[18px] w-[4px] h-[655px] flex flex-col rounded-b-[2px] overflow-hidden">
        <div className="h-[150px] bg-[#057cff]" />
        <div className="h-[165px] bg-[#3d95ff]" />
        <div className="h-[195px] bg-[#057cff]" />
        <div className="h-[145px] bg-[#3d95ff]" />
      </div>
    </div>
  );
}

function BrokenImage() {
  return (
    <svg width="16" height="16" viewBox="0 0 16 16">
      <path d="M.5.5h10l5 5v10H.5z" fill="#fff" stroke="#a8a8a8" />
      <path d="M2 2h8v4h4v2L9 11l-5 3H2z" fill="#c5d8f5" />
      <path d="M2 14l5-4 3 1 4 3-1 1H2z" fill="#5ba537" />
    </svg>
  );
}

function Invoice() {
  const dash = 'absolute border border-dashed border-[#d5c3c8]';
  return (
    <div className="ml-[290px] mt-[9px] w-[794px] h-[1123px] relative shrink-0 bg-white shadow-[0_0_6px_rgba(0,0,0,0.2)] bg-[image:linear-gradient(#e2e2e2_1px,transparent_1px),linear-gradient(90deg,#e2e2e2_1px,transparent_1px)] bg-size-[18.9px_18.9px] text-black font-['Noto_Sans_CJK_JP','Noto_Sans',sans-serif]">
      <div className="absolute left-[19px] top-0 w-[188px] h-[54px] bg-[#305596] border border-dashed border-[#9fb0cf] flex items-center justify-center text-white text-[26px] font-bold tracking-[5px] leading-none">請 求 書</div>
      <div className="absolute left-[19px] top-[54px] w-[510px] h-[3px] bg-[#305596]" />

      <div className={`${dash} left-[19px] top-[76px] w-[336px] h-[33px]`} />
      <div className="absolute left-[19px] top-[110px] w-[340px] h-[2px] bg-[#305596]" />
      <div className={`${dash} left-[361px] top-[82px] w-[55px] h-[28px] text-[15px] leading-[26px] pl-[1px] tracking-[1px]`}>御 中</div>
      <div className={`${dash} left-[37px] top-[120px] w-[108px] h-[22px] text-[13px] leading-[16px] pl-[1px]`}>〒:</div>
      <div className={`${dash} left-[151px] top-[120px] w-[210px] h-[22px]`} />
      <div className={`${dash} left-[151px] top-[148px] w-[46px] h-[21px]`} />
      <div className={`${dash} left-[201px] top-[148px] w-[160px] h-[21px]`} />
      <div className={`${dash} left-[31px] top-[190px] w-[330px] h-[32px] pl-[1px] pt-[12px] text-[16px] leading-[20px] tracking-[1px] whitespace-nowrap`}>下記の通りご請求申し上げます。</div>

      <div className="absolute left-[19px] top-[228px] w-[111px] h-[52px] bg-[#305596] border border-dashed border-[#9fb0cf] flex items-center justify-center text-white text-[15px] font-bold tracking-[3px]">請求金額</div>
      <div className={`${dash} left-[130px] top-[228px] w-[231px] h-[50px] bg-[#dce1f1]`} />
      <div className="absolute left-[130px] top-[278px] w-[231px] h-[2px] bg-[#305596]" />

      <div className={`${dash} left-[553px] top-[8px] w-[68px] h-[18px] text-[16px] leading-[14px] pl-[19px] whitespace-nowrap`}>No. :</div>
      <div className={`${dash} left-[621px] top-[8px] w-[150px] h-[18px]`} />
      <div className={`${dash} left-[549px] top-[36px] w-[72px] h-[18px] text-[16px] leading-[14px] pl-[2px] whitespace-nowrap`}>請求日 :</div>
      <div className={`${dash} left-[621px] top-[36px] w-[150px] h-[18px]`} />

      <div className={`${dash} left-[435px] top-[94px] w-[218px] h-[24px]`} />
      <div className={`${dash} left-[435px] top-[120px] w-[218px] h-[22px] text-[13px] leading-[16px] pl-[1px]`}>〒:</div>
      <div className={`${dash} left-[435px] top-[144px] w-[218px] h-[48px]`} />
      <div className={`${dash} left-[435px] top-[194px] w-[218px] h-[21px]`} />
      <div className={`${dash} left-[435px] top-[194px] w-[18px] h-[21px] pl-[2px] pt-[2px]`}><PhoneIcon /></div>
      <div className={`${dash} left-[435px] top-[218px] w-[218px] h-[22px]`} />
      <div className={`${dash} left-[435px] top-[218px] w-[18px] h-[22px] pl-[2px] pt-[2px]`}><FaxIcon /></div>
      <div className={`${dash} left-[435px] top-[242px] w-[218px] h-[22px]`} />
      <div className={`${dash} left-[435px] top-[242px] w-[18px] h-[22px] pl-[2px] pt-[2px]`}><MailIcon /></div>
      <div className="absolute left-[655px] top-[94px] w-[116px] h-[116px] border border-[#bbbbbb] pl-[1px] pt-[1px]"><BrokenImage /></div>
      <div className="absolute left-[468px] top-[284px] w-[2px] h-[2px] bg-[#cccccc]" />

      <div className="absolute left-[19px] top-[318px] w-[752px] border border-black">
        <div className="h-[43px] bg-[#305596] text-white grid grid-cols-[38px_337px_133px_113px_1fr] items-center text-[16px] border-b border-black">
          <span className="pl-[7px]">No.</span>
          <span className="pl-[6px] tracking-[1.2px]">商品名 / 品名</span>
          <span className="text-center tracking-[5px]">数 量</span>
          <span className="text-center tracking-[5px]">単 価</span>
          <span className="text-center tracking-[5px]">金 額</span>
        </div>
        <div className="h-[30px] grid grid-cols-[38px_337px_133px_113px_1fr] text-[13px] text-[#333]">
          <span className="border-r border-black text-right pr-[5px] leading-[30px]">1</span>
          <span className="border-r border-black" />
          <span className="border-r border-black" />
          <span className="border-r border-black" />
          <span />
        </div>
        <div className="absolute left-[-1px] top-[-1px] w-[16px] h-[16px] bg-[#057cff]" />
        <div className="absolute right-[-3px] top-[29px] w-[3px] h-[20px] bg-[#057cff]" />
        <div className="absolute left-[365px] top-[78px] w-[20px] h-[3px] bg-[#057cff]" />
      </div>

      <div className={`${dash} left-[512px] top-[834px] w-[257px] h-[22px] pl-[12px] text-[15px] leading-[18px] font-bold tracking-[.5px] whitespace-nowrap`}>小　計 (税抜)</div>
    </div>
  );
}

function Backdrop() {
  return (
    <svg width="1912" height="863" className="absolute left-0 top-0" fill="none" stroke="#f5f4f2" strokeWidth="3">
      <circle cx="135" cy="832" r="12" />
      <path d="M218 848l17 12" />
      <path d="M1582 826l-8 20h10z" />
      <path d="M1455 848l17 12" />
      <circle cx="1784" cy="828" r="9" />
      <path d="M1867 848l40 14" />
      <path d="M300 40l-6 14h12z" />
      <circle cx="480" cy="220" r="9" />
      <path d="M1390 160l12 12" />
      <circle cx="1400" cy="500" r="8" />
    </svg>
  );
}

export default function App() {
  return (
    <div className="w-[1912px] h-[958px] overflow-hidden bg-white flex flex-col font-['Noto_Sans','Noto_Sans_CJK_SC','Liberation_Sans',sans-serif]">
      <Header />
      <Toolbar />
      <TopRuler />
      <div className="h-[863px] relative flex items-start overflow-hidden bg-[#fbfafa]">
        <Backdrop />
        <div className="relative z-10 w-[24px] shrink-0 self-stretch bg-white"><LeftRuler /></div>
        <div className="relative z-20 ml-[4px] w-[240px] h-[833px] shrink-0">
          <ElementPanel />
          <OverviewPanel />
        </div>
        <div className="relative z-10 flex items-start">
          <Invoice />
          <StructurePanel />
          <PropertyPanel />
        </div>
      </div>
    </div>
  );
}
